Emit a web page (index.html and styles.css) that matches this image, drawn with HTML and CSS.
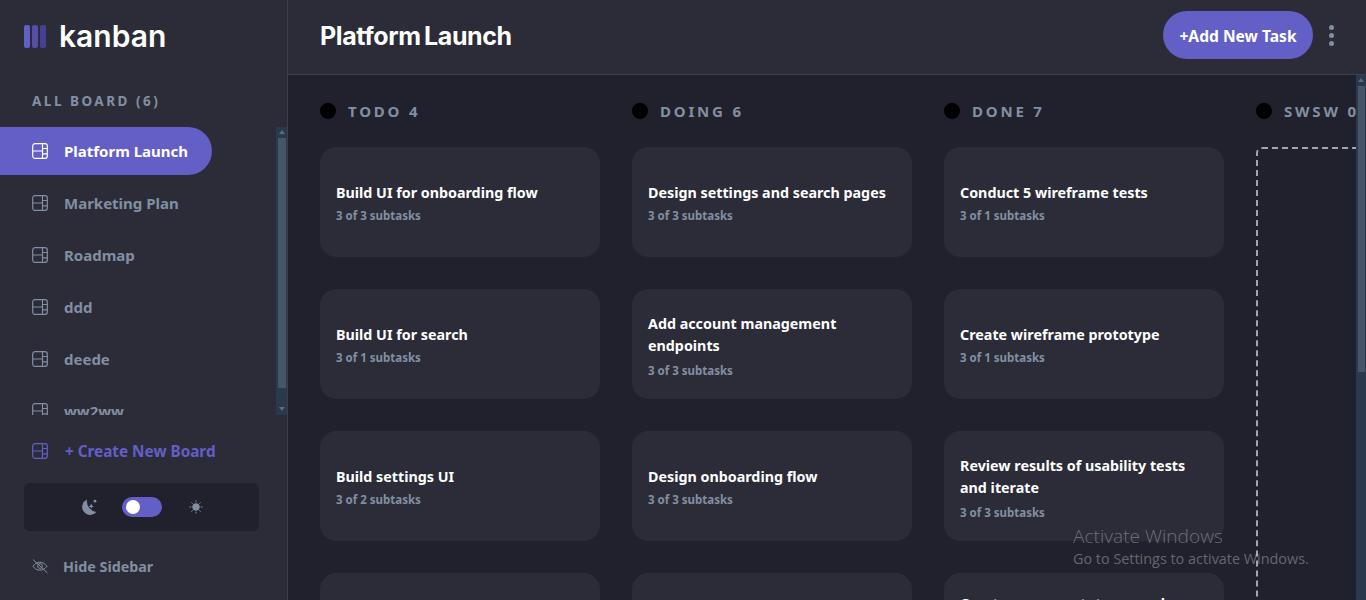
FILE: index.html
```html
<!DOCTYPE html>
<html lang="en">
<head>
    <meta charset="UTF-8">
    <title>Kanban</title>
    <link rel="stylesheet" href="styles.css">
</head>
<body>
    <div class="app">
        <aside class="sidebar">
            <div class="logo">
                <div class="logo-bars"><span></span><span></span><span></span></div>
                <div class="logo-text">kanban</div>
            </div>
            <div class="board-count">ALL BOARD (6)</div>
            <div class="board-list">
                <div class="board-item active">
                    <svg class="board-icon" viewBox="0 0 16 16"><path d="M3 .7h10A2.3 2.3 0 0 1 15.3 3v10a2.3 2.3 0 0 1-2.3 2.3H3A2.3 2.3 0 0 1 .7 13V3A2.3 2.3 0 0 1 3 .7zM.7 8h9.800M10.500.7v14.600M10.500 5.500h4.800M10.500 10.800h4.800"/></svg>
                    <span>Platform Launch</span>
                </div>
                <div class="board-item">
                    <svg class="board-icon" viewBox="0 0 16 16"><path d="M3 .7h10A2.3 2.3 0 0 1 15.3 3v10a2.3 2.3 0 0 1-2.3 2.3H3A2.3 2.3 0 0 1 .7 13V3A2.3 2.3 0 0 1 3 .7zM.7 8h9.800M10.500.7v14.600M10.500 5.500h4.800M10.500 10.800h4.800"/></svg>
                    <span>Marketing Plan</span>
                </div>
                <div class="board-item">
                    <svg class="board-icon" viewBox="0 0 16 16"><path d="M3 .7h10A2.3 2.3 0 0 1 15.3 3v10a2.3 2.3 0 0 1-2.3 2.3H3A2.3 2.3 0 0 1 .7 13V3A2.3 2.3 0 0 1 3 .7zM.7 8h9.800M10.500.7v14.600M10.500 5.500h4.800M10.500 10.800h4.800"/></svg>
                    <span>Roadmap</span>
                </div>
                <div class="board-item">
                    <svg class="board-icon" viewBox="0 0 16 16"><path d="M3 .7h10A2.3 2.3 0 0 1 15.3 3v10a2.3 2.3 0 0 1-2.3 2.3H3A2.3 2.3 0 0 1 .7 13V3A2.3 2.3 0 0 1 3 .7zM.7 8h9.800M10.500.7v14.600M10.500 5.500h4.800M10.500 10.800h4.800"/></svg>
                    <span>ddd</span>
                </div>
                <div class="board-item">
                    <svg class="board-icon" viewBox="0 0 16 16"><path d="M3 .7h10A2.3 2.3 0 0 1 15.3 3v10a2.3 2.3 0 0 1-2.3 2.3H3A2.3 2.3 0 0 1 .7 13V3A2.3 2.3 0 0 1 3 .7zM.7 8h9.800M10.500.7v14.600M10.500 5.500h4.800M10.500 10.800h4.800"/></svg>
                    <span>deede</span>
                </div>
                <div class="board-item">
                    <svg class="board-icon" viewBox="0 0 16 16"><path d="M3 .7h10A2.3 2.3 0 0 1 15.3 3v10a2.3 2.3 0 0 1-2.3 2.3H3A2.3 2.3 0 0 1 .7 13V3A2.3 2.3 0 0 1 3 .7zM.7 8h9.800M10.500.7v14.600M10.500 5.500h4.800M10.500 10.800h4.800"/></svg>
                    <span>ww2ww</span>
                </div>
                <div class="scrollbar list-scroll">
                    <div class="scroll-up"></div>
                    <div class="scroll-thumb"></div>
                    <div class="scroll-down"></div>
                </div>
            </div>
            <div class="create-board">
                <svg class="board-icon" viewBox="0 0 16 16"><path d="M3 .7h10A2.3 2.3 0 0 1 15.3 3v10a2.3 2.3 0 0 1-2.3 2.3H3A2.3 2.3 0 0 1 .7 13V3A2.3 2.3 0 0 1 3 .7zM.7 8h9.800M10.500.7v14.600M10.500 5.500h4.800M10.500 10.800h4.800"/></svg>
                <span>+ Create New Board</span>
            </div>
            <div class="theme-box">
                <svg class="moon" viewBox="0 0 17 17"><path d="M7 .6A8 8 0 1 0 16.400 13 11 11 0 0 1 7 .6z"/><path d="M11.200 4.400l.8 2 2 .8-2 .8-.8 2-.8-2-2-.8 2-.8z"/><circle cx="15" cy="2.200" r="1.400"/></svg>
                <div class="toggle"><div class="knob"></div></div>
                <svg class="sun" viewBox="0 0 14 14"><circle cx="7" cy="7" r="3.3"/><path d="M7 .5v1.800M7 11.700v1.800M.5 7h1.800M11.700 7h1.800M2.400 2.400l1.300 1.300M10.300 10.300l1.300 1.300M2.400 11.600l1.300-1.300M10.300 3.700l1.300-1.300"/></svg>
            </div>
            <div class="hide-sidebar">
                <svg class="eye" viewBox="0 0 16 16"><path d="M1 8.300c1.800-2.800 4-4.100 6.800-4.100s5.200 1.300 7.200 4.100c-2 2.600-4.400 3.900-7.200 3.900S2.800 10.900 1 8.300z"/><circle cx="8" cy="8" r="2.400"/><path d="M1 1.500l14.500 13.500"/></svg>
                <span>Hide Sidebar</span>
            </div>
        </aside>

        <main class="main">
            <header class="topbar">
                <h1>Platform Launch</h1>
                <div class="topbar-actions">
                    <button class="add-task">+Add New Task</button>
                    <div class="menu-dots"><span></span><span></span><span></span></div>
                </div>
            </header>

            <div class="board">
                <div class="column">
                    <div class="column-title"><span class="dot"></span><span class="column-name">TODO 4</span></div>
                    <div class="card"><h3>Build UI for onboarding flow</h3><p>3 of 3 subtasks</p></div>
                    <div class="card"><h3>Build UI for search</h3><p>3 of 1 subtasks</p></div>
                    <div class="card"><h3>Build settings UI</h3><p>3 of 2 subtasks</p></div>
                    <div class="card"><h3>QA and test all major user journeys</h3><p>3 of 2 subtasks</p></div>
                </div>
                <div class="column">
                    <div class="column-title"><span class="dot"></span><span class="column-name">DOING 6</span></div>
                    <div class="card"><h3>Design settings and search pages</h3><p>3 of 3 subtasks</p></div>
                    <div class="card two-line"><h3>Add account management endpoints</h3><p>3 of 3 subtasks</p></div>
                    <div class="card"><h3>Design onboarding flow</h3><p>3 of 3 subtasks</p></div>
                    <div class="card"><h3>Add search endpoints</h3><p>3 of 2 subtasks</p></div>
                </div>
                <div class="column">
                    <div class="column-title"><span class="dot"></span><span class="column-name">DONE 7</span></div>
                    <div class="card"><h3>Conduct 5 wireframe tests</h3><p>3 of 1 subtasks</p></div>
                    <div class="card"><h3>Create wireframe prototype</h3><p>3 of 1 subtasks</p></div>
                    <div class="card two-line"><h3>Review results of usability tests and iterate</h3><p>3 of 3 subtasks</p></div>
                    <div class="card"><h3>Create paper prototypes and conduct 10 usability tests with potential customers</h3><p>3 of 3 subtasks</p></div>
                </div>
                <div class="column">
                    <div class="column-title"><span class="dot"></span><span class="column-name">SWSW 0</span></div>
                    <div class="empty-column"></div>
                </div>
                <div class="scrollbar board-scroll">
                    <div class="scroll-up"></div>
                    <div class="scroll-thumb"></div>
                </div>
            </div>
        </main>
    </div>

    <div class="watermark">
        <div class="watermark-title">Activate Windows</div>
        <div class="watermark-sub">Go to Settings to activate Windows.</div>
    </div>
</body>
</html>
```

FILE: styles.css
```css
* {
    box-sizing: border-box;
}
html, body {
    margin: 0;
    height: 100%;
    overflow: hidden;
}
body {
    font-family: "Noto Sans", "Open Sans", sans-serif;
    background-color: #20212c;
    color: #fff;
}
.app {
    display: flex;
    height: 600px;
}

/* sidebar */
.sidebar {
    width: 288px;
    flex-shrink: 0;
    background-color: #2b2c37;
    border-right: 1px solid #3e3f4e;
    display: flex;
    flex-direction: column;
}
.logo {
    height: 72px;
    padding-left: 24px;
    display: flex;
    align-items: center;
    gap: 13px;
}
.logo-bars {
    display: flex;
    gap: 2px;
}
.logo-bars span {
    width: 6px;
    height: 23px;
    border-radius: 2px;
    background-color: #635fc7;
}
.logo-bars span:nth-child(2) {
    background-color: #524fa5;
}
.logo-bars span:nth-child(3) {
    background-color: #434194;
}
.logo-text {
    font-family: "Inter", sans-serif;
    font-size: 30px;
    font-weight: 600;
    letter-spacing: 0;
}
.board-count {
    margin: 21px 0 18px 32px;
    font-size: 13.5px;
    font-weight: 700;
    letter-spacing: 2.5px;
    line-height: 16px;
    color: #828fa3;
}
.board-list {
    position: relative;
    height: 288px;
    overflow: hidden;
}
.board-item {
    width: 212px;
    height: 48px;
    margin-bottom: 4px;
    padding-left: 32px;
    display: flex;
    align-items: center;
    gap: 16px;
    font-size: 15px;
    font-weight: 700;
    color: #828fa3;
    border-radius: 0 24px 24px 0;
}
.board-item.active {
    background-color: #635fc7;
    color: #fff;
}
.board-icon {
    width: 16px;
    height: 16px;
    flex-shrink: 0;
    fill: none;
    stroke: currentColor;
    stroke-width: 1.2;
}
.create-board {
    height: 48px;
    padding-left: 32px;
    display: flex;
    align-items: center;
    gap: 17px;
    margin-top: 12px;
    font-size: 15.3px;
    font-weight: 700;
    color: #635fc7;
}
.theme-box {
    width: 235px;
    height: 48px;
    margin: 8px 0 0 24px;
    border-radius: 6px;
    background-color: #20212c;
    display: flex;
    align-items: center;
    justify-content: center;
    gap: 25px;
}
.moon {
    width: 17px;
    height: 17px;
    fill: #828fa3;
}
.toggle {
    width: 40px;
    height: 20px;
    border-radius: 10px;
    background-color: #635fc7;
    padding: 3px 4px;
}
.knob {
    width: 14px;
    height: 14px;
    border-radius: 50%;
    background-color: #fff;
}
.sun {
    width: 14px;
    height: 14px;
    margin-left: 2px;
    fill: #828fa3;
    stroke: #828fa3;
}
.hide-sidebar {
    height: 48px;
    margin-top: 11px;
    padding-left: 32px;
    display: flex;
    align-items: center;
    gap: 15px;
    font-size: 14.3px;
    font-weight: 700;
    color: #828fa3;
}
.eye {
    width: 16px;
    height: 16px;
    fill: none;
    stroke: #828fa3;
}

/* drawn scrollbars */
.scrollbar {
    position: absolute;
    top: 0;
    right: 0;
    bottom: 0;
    background-color: #2b394c;
}
.list-scroll {
    width: 11px;
}
.board-scroll {
    width: 10px;
}
.scroll-up {
    height: 11px;
    position: relative;
}
.scroll-up::after {
    content: "";
    position: absolute;
    left: 50%;
    top: 3px;
    margin-left: -3px;
    border: 3px solid transparent;
    border-top: none;
    border-bottom: 4px solid #5d6b80;
}
.scroll-thumb {
    margin: 0 1.5px;
    height: 250px;
    background-color: #475569;
}
.board-scroll .scroll-thumb {
    height: 286px;
}
.scroll-down {
    position: absolute;
    left: 50%;
    bottom: 4px;
    margin-left: -3px;
    border: 3px solid transparent;
    border-bottom: none;
    border-top: 4px solid #5d6b80;
}

/* main area */
.main {
    flex: 1;
    min-width: 0;
    display: flex;
    flex-direction: column;
}
.topbar {
    height: 75px;
    flex-shrink: 0;
    background-color: #2b2c37;
    border-bottom: 1px solid #3e3f4e;
    padding: 0 32px 4px 32px;
    display: flex;
    align-items: center;
    justify-content: space-between;
}
.topbar h1 {
    margin: 2px 0 0;
    font-family: "Inter", sans-serif;
    font-size: 25px;
    font-weight: 700;
    letter-spacing: -0.4px;
    word-spacing: -2px;
}
.topbar-actions {
    display: flex;
    align-items: center;
    gap: 16px;
}
.add-task {
    width: 150px;
    height: 48px;
    padding: 2px 0 0;
    border: none;
    border-radius: 24px;
    background-color: #635fc7;
    color: #fff;
    font-family: inherit;
    font-size: 15.6px;
    font-weight: 700;
}
.menu-dots {
    display: flex;
    flex-direction: column;
    gap: 3px;
}
.menu-dots span {
    width: 5px;
    height: 5px;
    border-radius: 50%;
    background-color: #828fa3;
}
.board {
    position: relative;
    flex: 1;
    min-height: 0;
    padding: 24px 0 0 32px;
    display: flex;
    gap: 32px;
    overflow: hidden;
}
.column {
    width: 280px;
    flex-shrink: 0;
}
.column-title {
    height: 24px;
    margin-bottom: 24px;
    display: flex;
    align-items: center;
    gap: 12px;
    font-size: 15px;
    font-weight: 700;
    letter-spacing: 2.8px;
    color: #828fa3;
    white-space: nowrap;
}
.column-name {
    margin-top: -1px;
}
.dot {
    width: 16px;
    height: 16px;
    border-radius: 50%;
    background-color: #000;
}
.card {
    min-height: 110px;
    margin-bottom: 32px;
    padding: 20px 16px 16px;
    border-radius: 16px;
    background-color: #2b2c37;
    display: flex;
    flex-direction: column;
    justify-content: center;
}
.card h3 {
    margin: 0;
    font-size: 14.3px;
    font-weight: 700;
    line-height: 22px;
}
.card p {
    margin: 1px 0 0;
    font-size: 11.5px;
    font-weight: 700;
    line-height: 22px;
    color: #828fa3;
}
.card.two-line {
    padding-top: 22px;
}
.card.two-line p {
    margin-top: 3px;
}
.empty-column {
    height: 700px;
    margin-top: 1px;
    border: 2px dashed #a3a6b0;
    border-radius: 6px;
}

.watermark {
    position: absolute;
    left: 1073px;
    top: 524px;
    color: rgba(255, 255, 255, 0.32);
    font-family: "Open Sans", sans-serif;
    pointer-events: none;
}
.watermark-title {
    font-size: 19.1px;
    font-weight: 300;
    line-height: 24px;
}
.watermark-sub {
    font-size: 14.4px;
    line-height: 21px;
}
```
